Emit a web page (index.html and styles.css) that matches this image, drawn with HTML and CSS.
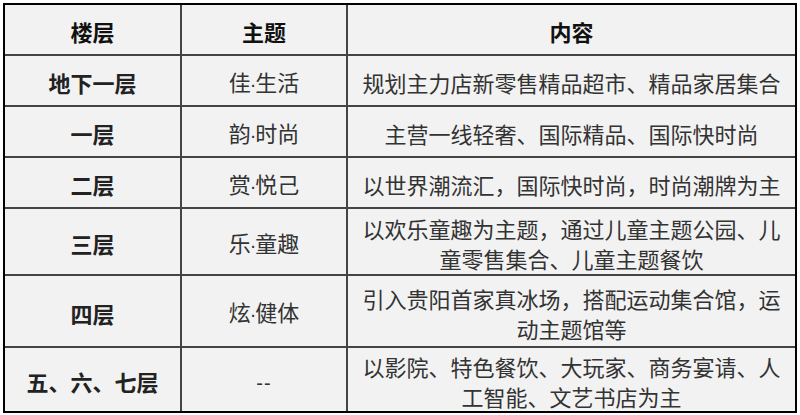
FILE: index.html
```html
<!DOCTYPE html>
<html lang="zh-CN">
<head>
<meta charset="utf-8">
<title>楼层</title>
<link rel="stylesheet" href="styles.css">
</head>
<body>
<table class="floors">
  <colgroup>
    <col class="c-floor">
    <col class="c-theme">
    <col class="c-content">
  </colgroup>
  <thead>
    <tr class="r-head">
      <th>楼层</th>
      <th>主题</th>
      <th class="last">内容</th>
    </tr>
  </thead>
  <tbody>
    <tr class="r-1">
      <td class="floor">地下一层</td>
      <td>佳<span class="dot">·</span>生活</td>
      <td class="last">规划主力店新零售精品超市、精品家居集合</td>
    </tr>
    <tr class="r-2">
      <td class="floor">一层</td>
      <td>韵<span class="dot">·</span>时尚</td>
      <td class="last">主营一线轻奢、国际精品、国际快时尚</td>
    </tr>
    <tr class="r-3">
      <td class="floor">二层</td>
      <td>赏<span class="dot">·</span>悦己</td>
      <td class="last">以世界潮流汇，国际快时尚，时尚潮牌为主</td>
    </tr>
    <tr class="r-4">
      <td class="floor">三层</td>
      <td>乐<span class="dot">·</span>童趣</td>
      <td class="last">以欢乐童趣为主题，通过儿童主题公园、儿童零售集合、儿童主题餐饮</td>
    </tr>
    <tr class="r-5">
      <td class="floor">四层</td>
      <td>炫<span class="dot">·</span>健体</td>
      <td class="last">引入贵阳首家真冰场，搭配运动集合馆，运动主题馆等</td>
    </tr>
    <tr class="r-6">
      <td class="floor bottom">五、六、七层</td>
      <td class="bottom"><span class="dash">--</span></td>
      <td class="last bottom">以影院、特色餐饮、大玩家、商务宴请、人工智能、文艺书店为主</td>
    </tr>
  </tbody>
</table>
</body>
</html>
```
FILE: styles.css
```css
html, body {
  margin: 0;
  padding: 0;
  background: #ffffff;
}
body {
  padding: 3px;
  font-family: "Noto Sans CJK SC", "Noto Sans", sans-serif;
}
.floors {
  width: 794px;
  table-layout: fixed;
  border-collapse: separate;
  border-spacing: 0;
  border: 2px solid #000;
  background: #f2f2f2;
  box-sizing: border-box;
}
.c-floor { width: 177px; }
.c-theme { width: 166px; }
.c-content { width: 447px; }

.floors th,
.floors td {
  box-sizing: border-box;
  border-right: 2px solid #444;
  border-bottom: 2px solid #444;
  text-align: center;
  vertical-align: middle;
  font-size: 22px;
  line-height: 30px;
  padding: 3px 10px 0 10px;
  color: #333;
  font-weight: 400;
}
.floors th {
  color: #111;
  font-weight: 700;
}
.floors td.floor {
  color: #222;
  font-weight: 700;
}
.floors .last { border-right: none; }
.floors .bottom { border-bottom: none; }

.dot {
  font-family: "Liberation Sans", sans-serif;
  font-size: 20px;
  margin: 0 -1px;
}
.dash {
  font-family: "Liberation Sans", sans-serif;
  font-size: 20px;
  letter-spacing: 1px;
}

.r-head { height: 51px; }
.r-1 { height: 51px; }
.r-2 { height: 51px; }
.r-3 { height: 51px; }
.r-4 { height: 67px; }
.r-5 { height: 72px; }
.r-6 { height: 61px; }
```
